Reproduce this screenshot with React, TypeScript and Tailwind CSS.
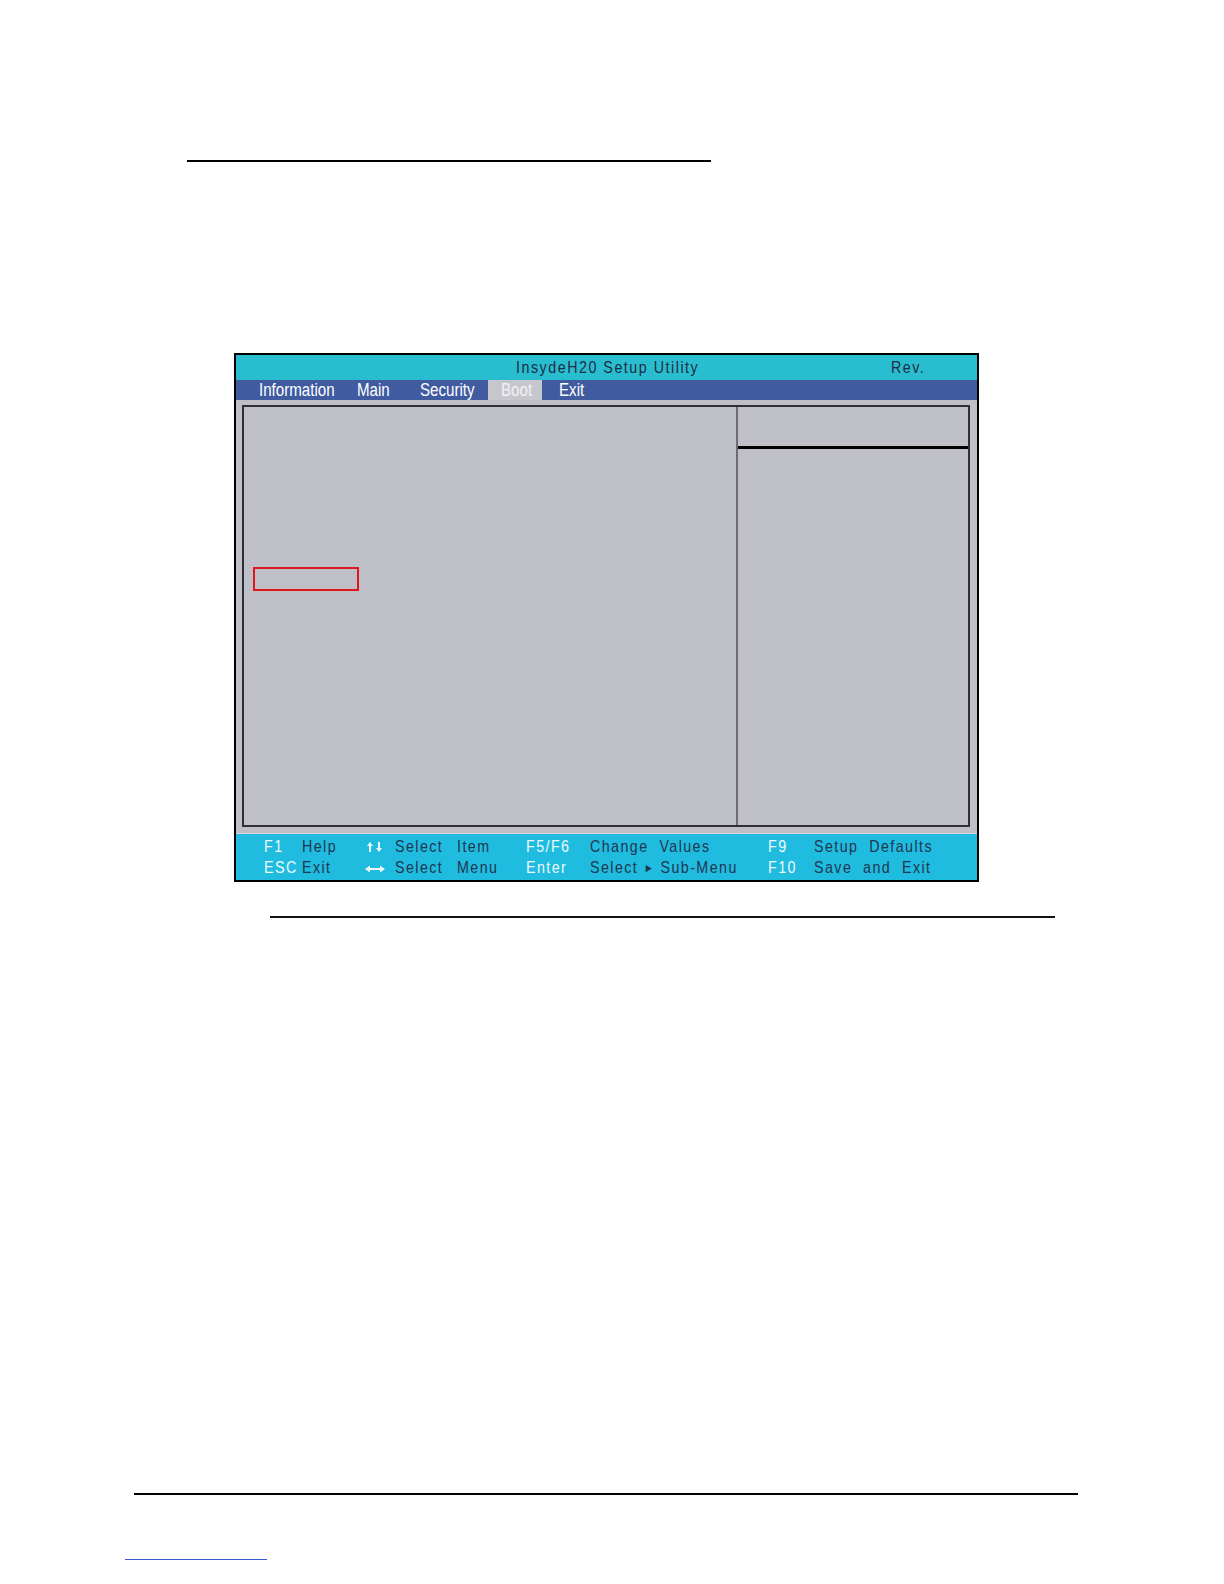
import React from 'react';

const narrow = 'inline-block origin-left scale-x-[0.84] whitespace-nowrap';

const Key: React.FC<{ w: string; children: React.ReactNode }> = ({ w, children }) => (
  <span className={`${w} shrink-0 text-[#eef8fb]`}>
    <span className={narrow}>{children}</span>
  </span>
);

const Label: React.FC<{ w: string; children: React.ReactNode }> = ({ w, children }) => (
  <span className={`${w} shrink-0 text-[#22364f]`}>
    <span className={narrow}>{children}</span>
  </span>
);

const UpDown = () => (
  <svg width="18" height="12" viewBox="0 0 18 12" className="mt-[5px]">
    <path d="M4 1 L1 5 H3 V11 H5 V5 H7 Z" fill="#eef8fb" />
    <path d="M13 11 L10 7 H12 V1 H14 V7 H16 Z" fill="#eef8fb" />
  </svg>
);

const LeftRight = () => (
  <svg width="20" height="8" viewBox="0 0 20 8" className="mt-[8px]">
    <path d="M0 4 L5 0.5 V3 H15 V0.5 L20 4 L15 7.5 V5 H5 V7.5 Z" fill="#eef8fb" />
  </svg>
);

const BiosScreen: React.FC = () => {
  return (
    <div className="ml-[234px] w-[745px] h-[529px] border-2 border-black flex flex-col overflow-hidden font-['Liberation_Sans',Arial,sans-serif]">
      {/* title bar */}
      <div className="h-[25px] bg-[#29bdd0] flex items-center text-[17px] tracking-[1.8px] text-[#1f2c44] pl-[280px]">
        <span className="w-[375px] shrink-0">
          <span className={narrow}>InsydeH20 Setup Utility</span>
        </span>
        <span className={narrow}>Rev.</span>
      </div>

      {/* menu bar */}
      <div className="h-[20px] bg-[#405ba0] flex items-center text-[18px] text-white pl-[23px] leading-none">
        <span className="w-[98px] shrink-0"><span className={narrow}>Information</span></span>
        <span className="w-[63px] shrink-0"><span className={narrow}>Main</span></span>
        <span className="w-[68px] shrink-0"><span className={narrow}>Security</span></span>
        <span className="w-[54px] h-full shrink-0 bg-[#c6c6cd] text-[#f2f2f5] pl-[13px] flex items-center">
          <span className={narrow}>Boot</span>
        </span>
        <span className="ml-[17px]"><span className={narrow}>Exit</span></span>
      </div>

      {/* body */}
      <div className="h-[433px] bg-[#bfbfc7] pt-[5px] pl-[6px] pr-[7px] pb-[6px]">
        <div className="h-full border-2 border-[#2e2e33] flex">
          <div className="w-[492px] shrink-0 pt-[160px] pl-[9px]">
            <div className="w-[106px] h-[24px] border-2 border-[#e1161c]" />
          </div>
          <div className="w-[2px] bg-[#6c6c72]" />
          <div className="flex-1 pt-[39px]">
            <div className="h-[3px] bg-black" />
          </div>
        </div>
      </div>

      {/* footer */}
      <div className="flex-1 border-t border-[#d4d4da] bg-[#1fbce0] pl-[28px] pt-[2px] text-[17px] tracking-[1.7px] leading-[21px]">
        <div className="flex">
          <Key w="w-[38px]">F1</Key>
          <Label w="w-[63px]">Help</Label>
          <span className="w-[30px] shrink-0 pl-[1px]"><UpDown /></span>
          <Label w="w-[62px]">Select</Label>
          <Label w="w-[69px]">Item</Label>
          <Key w="w-[64px]">F5/F6</Key>
          <Label w="w-[178px]">Change&nbsp;&nbsp;Values</Label>
          <Key w="w-[46px]">F9</Key>
          <Label w="w-[150px]">Setup&nbsp;&nbsp;Defaults</Label>
        </div>
        <div className="flex">
          <Key w="w-[38px]">ESC</Key>
          <Label w="w-[63px]">Exit</Label>
          <span className="w-[30px] shrink-0 flex items-start"><LeftRight /></span>
          <Label w="w-[62px]">Select</Label>
          <Label w="w-[69px]">Menu</Label>
          <Key w="w-[64px]">Enter</Key>
          <Label w="w-[178px]">
            Select&nbsp;<span className="text-[12px] align-[1px]">►</span>&nbsp;Sub-Menu
          </Label>
          <Key w="w-[46px]">F10</Key>
          <Label w="w-[150px]">Save&nbsp;&nbsp;and&nbsp;&nbsp;Exit</Label>
        </div>
      </div>
    </div>
  );
};

const App: React.FC = () => {
  return (
    <div className="w-[1224px] h-[1584px] bg-white overflow-hidden">
      <div className="pt-[160px]">
        <div className="ml-[187px] w-[524px] h-[2px] bg-black" />
      </div>
      <div className="mt-[191px]">
        <BiosScreen />
      </div>
      <div className="mt-[34px] ml-[270px] w-[785px] h-[2px] bg-[#111]" />
      <div className="mt-[575px] ml-[134px] w-[944px] h-[2px] bg-black" />
      <div className="mt-[64px] ml-[125px] w-[142px] h-px bg-[#3b5bd6]" />
    </div>
  );
};

export default App;
